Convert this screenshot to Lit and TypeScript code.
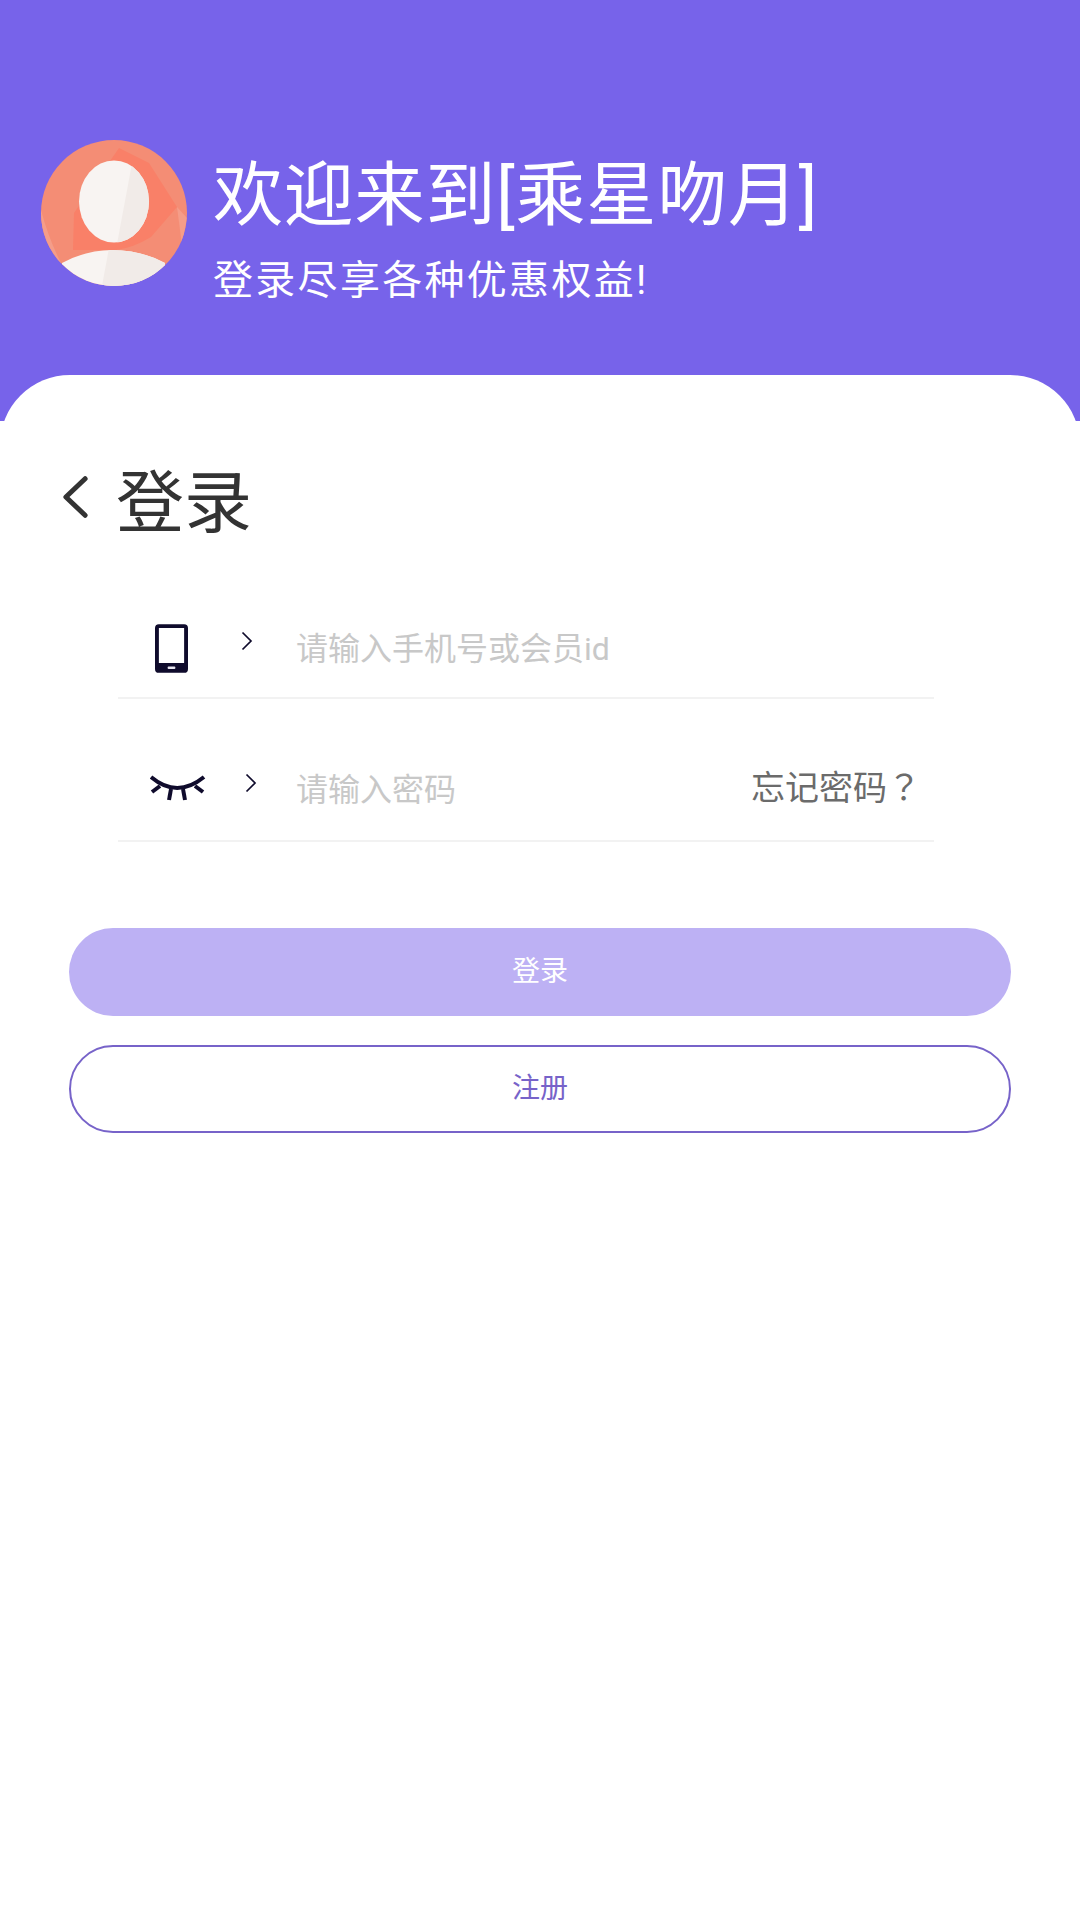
import { LitElement, html, css, svg } from "lit";
import { customElement } from "lit/decorators.js";

const avatar = svg`<svg class="avatar" viewBox="0 0 146 146" width="146" height="146">
  <defs>
    <clipPath id="c"><circle cx="73" cy="73" r="73"/></clipPath>
    <clipPath id="h"><ellipse cx="73" cy="61.5" rx="35" ry="41"/></clipPath>
    <clipPath id="b"><path d="M21 123 Q45 110 71 110 Q100 110 124 123 L124 146 L21 146Z"/></clipPath>
  </defs>
  <g clip-path="url(#c)">
    <rect width="146" height="146" fill="#f48d75"/>
    <path d="M0 70 Q8 100 21 125 L0 146Z" fill="#f59d89"/>
    <path d="M33 73 L78 8 L108 23 L136 67 L110 97 Q92 108 75 110 L32 110Z" fill="#f98068"/>
    <path d="M136 67 L146 78 L141 105Z" fill="#f59d89"/>
    <ellipse cx="73" cy="61.5" rx="35" ry="41" fill="#f8f4f2"/>
    <path clip-path="url(#h)" d="M92 18 L76 104 L111 104 L111 18Z" fill="#f1ebe8"/>
    <path d="M21 123 Q45 110 71 110 Q100 110 124 123 L124 146 L21 146Z" fill="#f8f4f2"/>
    <path clip-path="url(#b)" d="M68 108 L61 146 L130 146 L130 108Z" fill="#f1ebe8"/>
  </g>
</svg>`;

const phone = svg`<svg viewBox="0 0 34 50" width="33" height="49">
  <path fill-rule="evenodd" fill="#0f0b2c" d="M4 0h26a4 4 0 0 1 4 4v42a4 4 0 0 1-4 4H4a4 4 0 0 1-4-4V4a4 4 0 0 1 4-4Zm0 4v36h26V4Z"/>
  <rect x="13" y="43.5" width="8" height="2.5" rx="1" fill="#e8e6f0"/>
</svg>`;

const eye = svg`<svg viewBox="0 0 56 26" width="56" height="26" fill="none" stroke="#0f0b2c" stroke-width="4">
  <path d="M1 2 Q27 24 54 2"/>
  <path d="M10 11 L2 17"/><path d="M21 14 L19 25"/><path d="M33 14 L35 25"/><path d="M45 11 L53 17"/>
</svg>`;

const chevron = svg`<svg viewBox="0 0 12 20" width="12" height="20" fill="none" stroke="#0f0b2c" stroke-width="1.7">
  <path d="M1.5 1.5 L10 10 L1.5 18.5"/>
</svg>`;

const back = svg`<svg class="back" viewBox="0 0 26 44" width="25" height="44" fill="none" stroke="#333" stroke-width="5.2" stroke-linecap="round" stroke-linejoin="round">
  <path d="M23 3 L3 22 L23 41"/>
</svg>`;

@customElement("app-root")
export class AppRoot extends LitElement {
  static styles = css`
    :host {
      display: block;
      width: 1080px;
      height: 1920px;
      background: #fff;
      font-family: Roboto, "Noto Sans CJK SC", sans-serif;
      font-weight: 400;
      overflow: hidden;
    }
    .header {
      height: 421px;
      background: #7763ea;
      overflow: hidden;
      display: flex;
      flex-direction: column;
    }
    .welcome {
      height: 375px;
      flex: none;
      box-sizing: border-box;
      padding: 140px 0 0 41px;
      display: flex;
      gap: 26px;
      color: #fff;
    }
    .avatar { display: block; flex: none; }
    .texts { display: flex; flex-direction: column; }
    .title {
      font-size: 70px;
      line-height: 70px;
      letter-spacing: 0.8px;
      margin-top: 21px;
      white-space: nowrap;
    }
    .sub {
      font-size: 40px;
      line-height: 44px;
      letter-spacing: 2.3px;
      margin-top: 28px;
      white-space: nowrap;
    }
    .curve {
      flex: none;
      height: 140px;
      background: #fff;
      border-radius: 70px 70px 0 0;
    }
    .heading {
      display: flex;
      align-items: center;
      gap: 28px;
      padding: 47px 0 0 63px;
      height: 72px;
      color: #333;
      font-size: 68px;
      line-height: 72px;
    }
    .back { margin-top: -14px; }
    .form {
      margin: 59px 146px 0 118px;
      display: flex;
      flex-direction: column;
    }
    .row {
      display: flex;
      align-items: center;
      height: 98px;
      border-bottom: 2px solid #f2f2f2;
      font-size: 32px;
      color: #c8c8c8;
    }
    .row + .row { margin-top: 42px; height: 99px; }
    .icon { width: 120px; flex: none; display: flex; justify-content: center; }
    .icon svg { display: block; }
    .row1 .icon { width: 107px; }
    .row2 .icon svg { margin-top: -6px; }
    .chev { flex: none; display: flex; }
    .row1 .chev { margin: -14px 0 0 16px; }
    .row2 .chev { margin: -16px 0 0 7px; }
    .row1 .ph { margin: -4px 0 0 43px; }
    .row2 .ph { margin: -8px 0 0 39px; flex: 1; }
    .forgot {
      font-size: 34px;
      color: #6b6b6b;
      margin: -10px 13px 0 0;
    }
    .fw { font-family: "Noto Sans CJK TC", sans-serif; }
    .buttons {
      margin: 86px 69px 0 69px;
      display: flex;
      flex-direction: column;
      gap: 29px;
    }
    .btn {
      box-sizing: border-box;
      height: 88px;
      border-radius: 44px;
      display: flex;
      align-items: center;
      justify-content: center;
      font-size: 28px;
      line-height: 32px;
    }
    .primary { background: #bdb1f4; color: #fff; }
    .outline { border: 2px solid #7763c9; color: #7763c9; }
  `;

  render() {
    return html`
      <div class="header">
        <div class="welcome">
          ${avatar}
          <div class="texts">
            <div class="title">欢迎来到[乘星吻月]</div>
            <div class="sub">登录尽享各种优惠权益!</div>
          </div>
        </div>
        <div class="curve"></div>
      </div>
      <div class="heading">${back}<span>登录</span></div>
      <div class="form">
        <div class="row row1">
          <div class="icon">${phone}</div>
          <div class="chev">${chevron}</div>
          <div class="ph">请输入手机号或会员id</div>
        </div>
        <div class="row row2">
          <div class="icon">${eye}</div>
          <div class="chev">${chevron}</div>
          <div class="ph">请输入密码</div>
          <div class="forgot">忘记密码<span class="fw">？</span></div>
        </div>
      </div>
      <div class="buttons">
        <div class="btn primary"><span>登录</span></div>
        <div class="btn outline"><span>注册</span></div>
      </div>
    `;
  }
}
